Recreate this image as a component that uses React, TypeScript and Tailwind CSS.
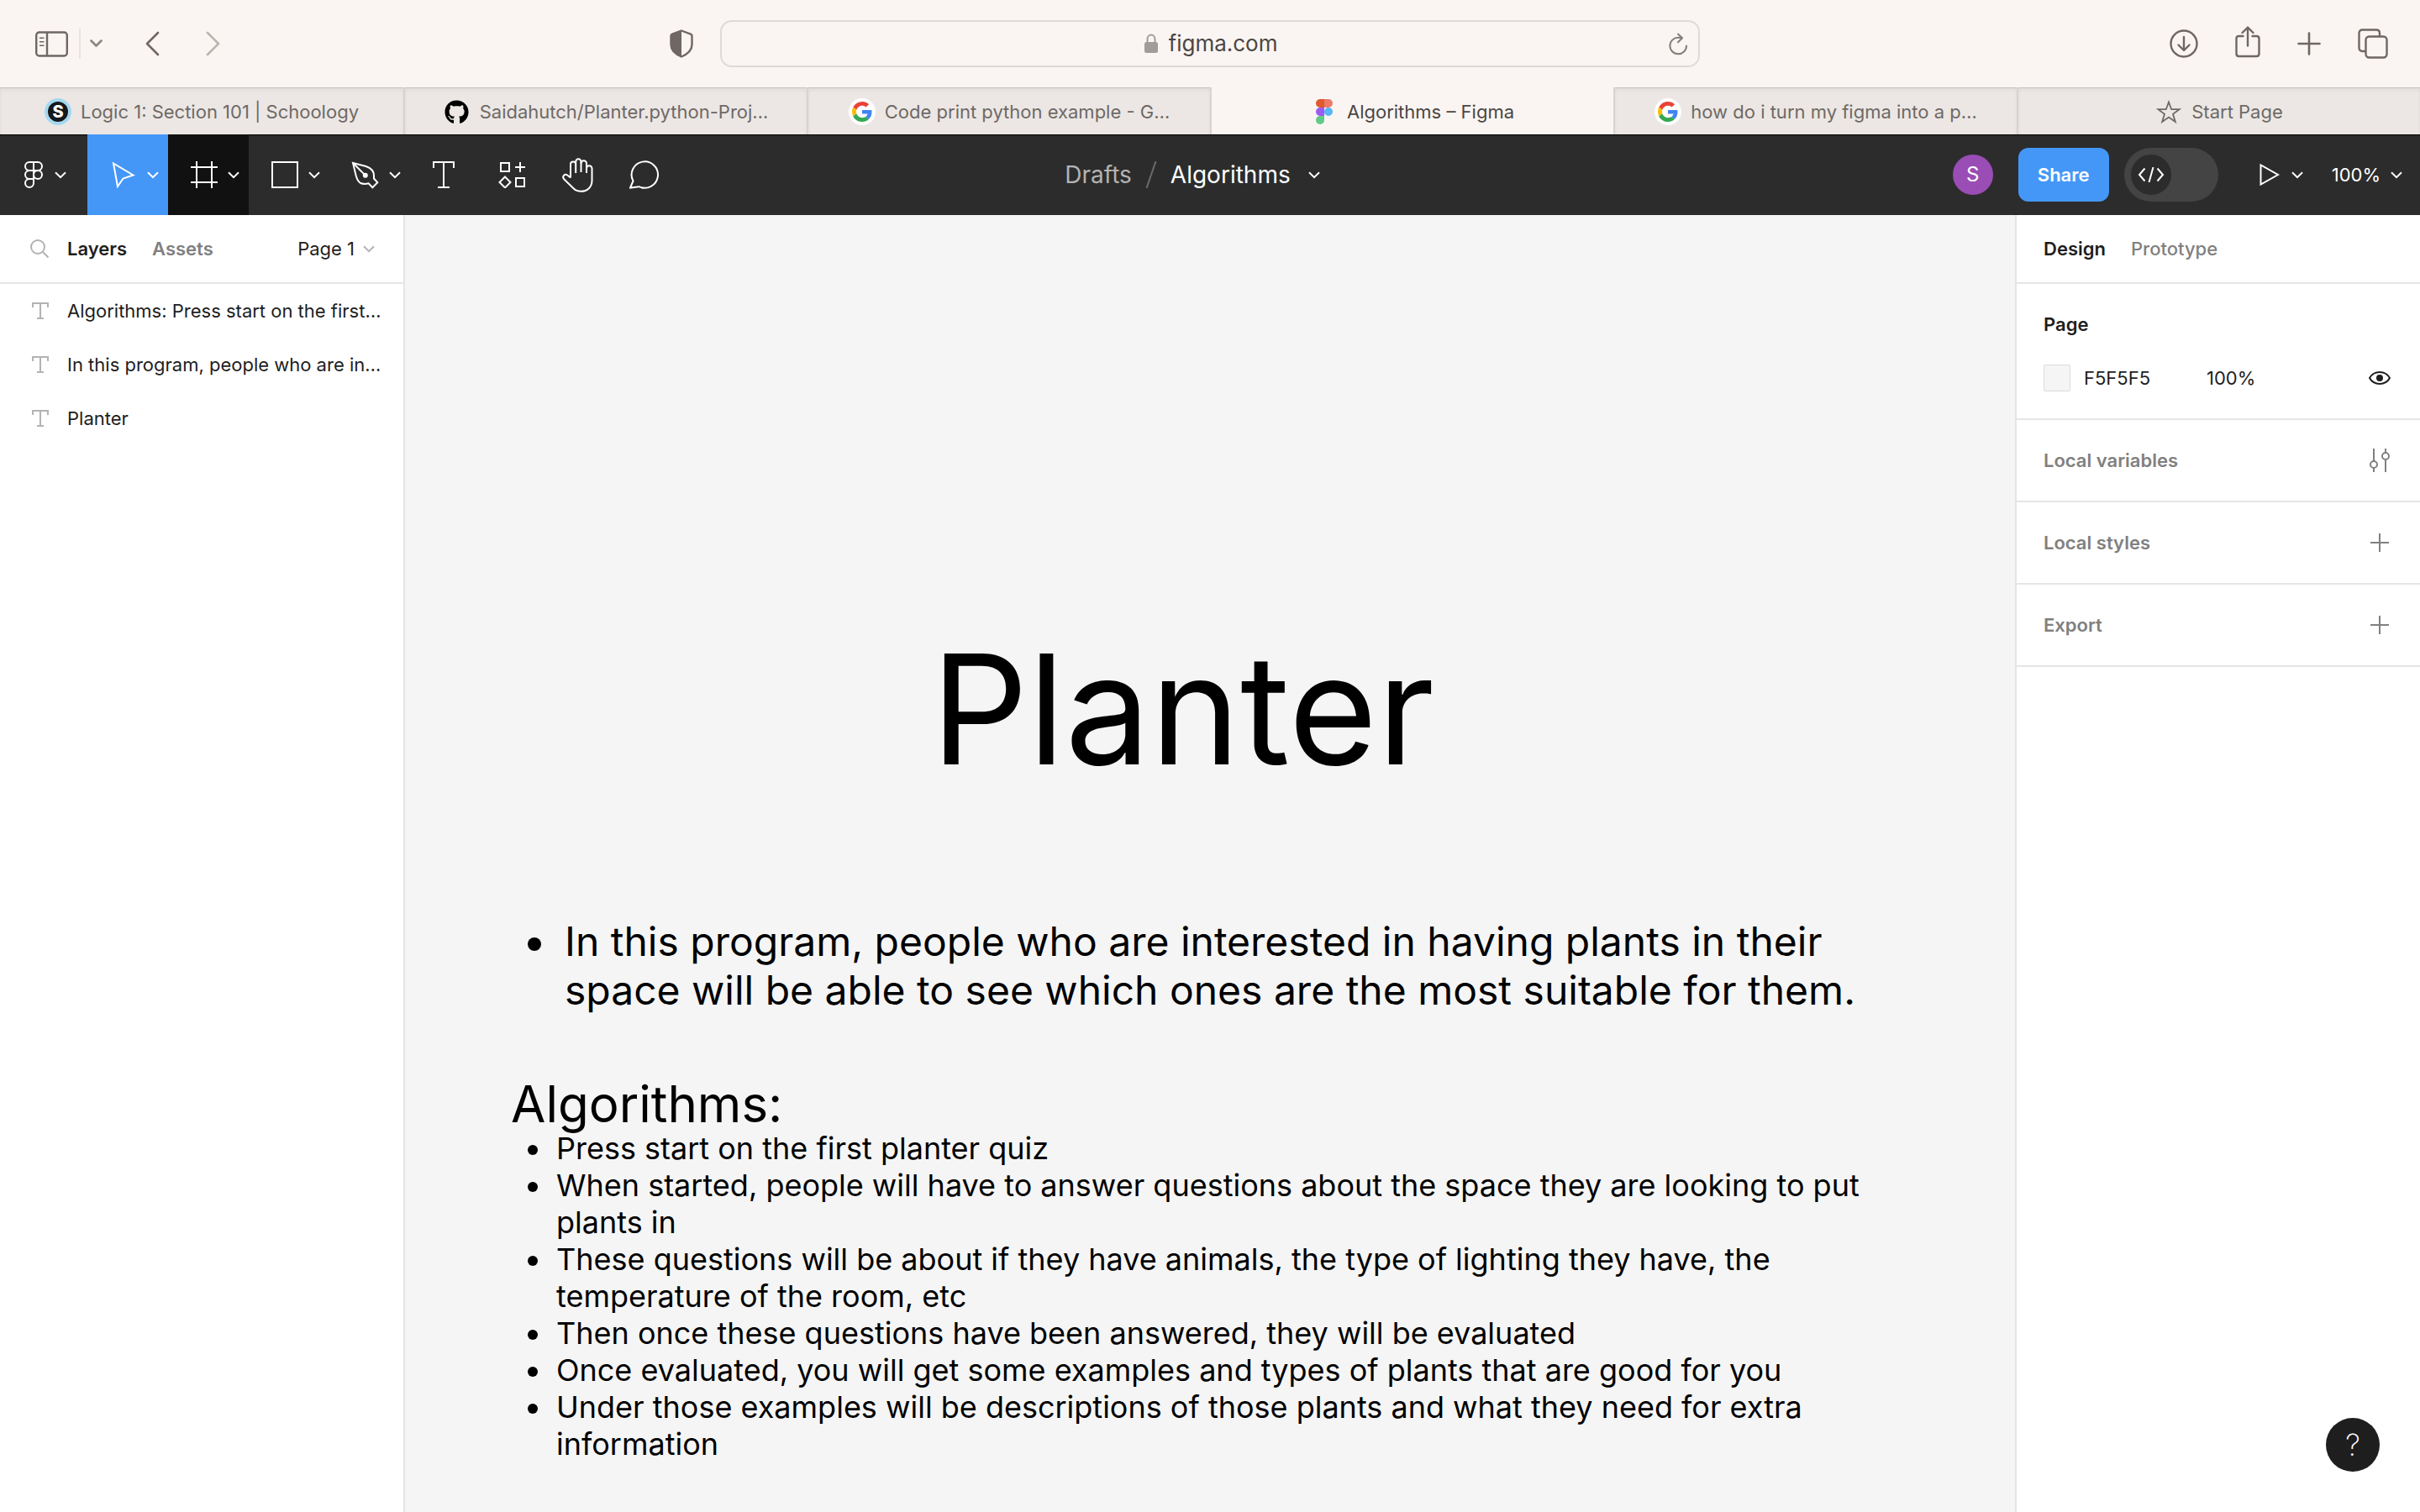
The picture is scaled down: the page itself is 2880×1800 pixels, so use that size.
import type { ReactNode } from "react";
import { FaGithub } from "react-icons/fa";

type IconProps = { className?: string };

function Chevron({ className = "" }: IconProps) {
  return (
    <svg viewBox="0 0 14 9" className={`h-[9px] w-[14px] shrink-0 ${className}`} fill="none" stroke="currentColor" strokeWidth="2" aria-hidden="true">
      <path d="M1 1.2 7 7.2l6-6" />
    </svg>
  );
}

function PlusIcon({ className = "" }: IconProps) {
  return (
    <svg viewBox="0 0 22 22" className={className} fill="none" stroke="currentColor" strokeWidth="2" aria-hidden="true">
      <path d="M11 0v22M0 11h22" />
    </svg>
  );
}

function TypeIcon({ className = "" }: IconProps) {
  return (
    <svg viewBox="0 0 26 32" className={className} fill="none" stroke="currentColor" strokeWidth="2" aria-hidden="true">
      <path d="M1 8V1h24v7M13 1v30M6 31h14" />
    </svg>
  );
}

function SidebarIcon() {
  return (
    <svg viewBox="0 0 39 31" className="h-[31px] w-[39px]" fill="none" stroke="currentColor" strokeWidth="2.4" aria-hidden="true">
      <rect x="1.2" y="1.5" width="36.6" height="28" rx="3.5" />
      <path d="M14 1.5v28" />
      <path d="M5 8.3h5.5M5 12.8h5.5M5 17.3h5.5" strokeWidth="1.5" />
    </svg>
  );
}

function BackIcon({ className = "" }: IconProps) {
  return (
    <svg viewBox="0 0 17 30" className={`h-[30px] w-[17px] ${className}`} fill="none" stroke="currentColor" strokeWidth="2.6" strokeLinecap="round" strokeLinejoin="round" aria-hidden="true">
      <path d="M15 2 2 15l13 13" />
    </svg>
  );
}

function ShieldIcon() {
  return (
    <svg viewBox="0 0 28 34" className="h-[34px] w-[28px]" aria-hidden="true">
      <path d="M14 1.5 25 5.6q1.5.6 1.5 2.2V18c0 7-5.5 11.5-12.5 14.5C7 29.5 1.5 25 1.5 18V7.8q0-1.6 1.5-2.2Z" fill="none" stroke="currentColor" strokeWidth="2.4" />
      <path d="M14 1.5 3 5.6Q1.5 6.2 1.5 7.8V18c0 7 5.5 11.5 12.5 14.5Z" fill="currentColor" />
    </svg>
  );
}

function LockIcon() {
  return (
    <svg viewBox="0 0 18 24" className="h-[24px] w-[18px]" aria-hidden="true">
      <path d="M4.5 11V6.5a4.5 5 0 0 1 9 0V11" fill="none" stroke="currentColor" strokeWidth="2" />
      <rect x="1" y="10" width="16" height="13" rx="2.5" fill="currentColor" />
    </svg>
  );
}

function ReloadIcon() {
  return (
    <svg viewBox="0 0 23 27" className="h-[27px] w-[23px]" fill="none" stroke="currentColor" strokeWidth="2" strokeLinecap="round" strokeLinejoin="round" aria-hidden="true">
      <path d="M21 15.5a9.8 9.8 0 1 1-9.5-9.8l4 .3" />
      <path d="m11 1.5 5 4.7-5 5" />
    </svg>
  );
}

function DownloadIcon() {
  return (
    <svg viewBox="0 0 34 34" className="size-[34px]" fill="none" stroke="currentColor" strokeWidth="2.4" strokeLinecap="round" strokeLinejoin="round" aria-hidden="true">
      <circle cx="17" cy="17" r="15.5" />
      <path d="M17 9v15.5M10.5 18.5l6.5 6.5 6.5-6.5" />
    </svg>
  );
}

function ShareIcon() {
  return (
    <svg viewBox="0 0 30 38" className="h-[38px] w-[30px]" fill="none" stroke="currentColor" strokeWidth="2.4" strokeLinecap="round" strokeLinejoin="round" aria-hidden="true">
      <path d="M9.5 12H4.5Q1.5 12 1.5 15v18q0 3 3 3h21q3 0 3-3V15q0-3-3-3h-5" />
      <path d="M15 23.5V2M8.5 8 15 1.6 21.5 8" />
    </svg>
  );
}

function TabsIcon() {
  return (
    <svg viewBox="0 0 36 36" className="size-[36px]" fill="none" stroke="currentColor" strokeWidth="2.4" aria-hidden="true">
      <rect x="9.5" y="9.5" width="25" height="25" rx="4" />
      <path d="M9.5 27H5.5q-4 0-4-4V5.5q0-4 4-4H22q4 0 4 4v4" />
    </svg>
  );
}

function StarIcon() {
  return (
    <svg viewBox="0 0 30 29" className="h-[29px] w-[30px]" fill="none" stroke="currentColor" strokeWidth="1.8" strokeLinejoin="miter" aria-hidden="true">
      <path d="M15 2.5 18.2 11.2H27.5L20 16.8 22.8 26 15 20.5 7.2 26 10 16.8 2.5 11.2H11.8Z" />
    </svg>
  );
}

function SchoologyIcon() {
  return (
    <span className="flex size-8 items-center justify-center rounded-full bg-[#a4d8f0]">
      <span className="flex size-6 items-center justify-center rounded-full bg-[#15191c] text-[20px] leading-6 font-extrabold text-white">S</span>
    </span>
  );
}

function GoogleIcon() {
  return (
    <span className="flex size-8 items-center justify-center rounded-full bg-white">
      <svg viewBox="0 0 48 48" className="size-6" aria-hidden="true">
        <path fill="#ea4335" d="M24 9.5c3.54 0 6.71 1.22 9.21 3.6l6.85-6.85C35.9 2.38 30.47 0 24 0 14.62 0 6.51 5.38 2.56 13.22l7.98 6.19C12.43 13.72 17.74 9.5 24 9.5z" />
        <path fill="#4285f4" d="M46.98 24.55c0-1.57-.15-3.09-.38-4.55H24v9.02h12.94c-.58 2.96-2.26 5.48-4.78 7.18l7.73 6c4.51-4.18 7.09-10.36 7.09-17.65z" />
        <path fill="#fbbc05" d="M10.53 28.59c-.48-1.45-.76-2.99-.76-4.59s.27-3.14.76-4.59l-7.98-6.19C.92 16.46 0 20.12 0 24c0 3.88.92 7.54 2.56 10.78l7.97-6.19z" />
        <path fill="#34a853" d="M24 48c6.48 0 11.93-2.13 15.89-5.81l-7.73-6c-2.15 1.45-4.92 2.3-8.16 2.3-6.26 0-11.57-4.22-13.47-9.91l-7.98 6.19C6.51 42.62 14.62 48 24 48z" />
      </svg>
    </span>
  );
}

function FigmaColorIcon() {
  return (
    <svg viewBox="0 0 20 30" className="h-[30px] w-5" aria-hidden="true">
      <path fill="#e0592f" d="M10 0H5a5 5 0 0 0 0 10h5z" />
      <path fill="#ee7a6a" d="M10 0h5a5 5 0 0 1 0 10h-5z" />
      <path fill="#9a5cf5" d="M10 10H5a5 5 0 0 0 0 10h5z" />
      <circle fill="#55b6f8" cx="15" cy="15" r="5" />
      <path fill="#5fcb86" d="M5 20a5 5 0 1 0 5 5v-5z" />
    </svg>
  );
}

function FigmaMenuIcon() {
  return (
    <svg viewBox="0 0 22 32" className="h-8 w-[22px]" fill="none" stroke="currentColor" strokeWidth="2" aria-hidden="true">
      <path d="M11 1H6a5 5 0 0 0 0 10h5zM11 1h5a5 5 0 0 1 0 10h-5zM11 11H6a5 5 0 0 0 0 10h5zM6 21a5 5 0 1 0 5 5v-5z" />
      <circle cx="16" cy="16" r="5" />
    </svg>
  );
}

function MoveIcon() {
  return (
    <svg viewBox="0 0 32 32" className="size-8" fill="none" stroke="currentColor" strokeWidth="2" aria-hidden="true">
      <path d="M4 2.5 27.5 16.5 15.5 20.5 9 30Z" />
    </svg>
  );
}

function FrameIcon() {
  return (
    <svg viewBox="0 0 32 32" className="size-8" fill="none" stroke="currentColor" strokeWidth="2" aria-hidden="true">
      <path d="M7 0v32M25 0v32M0 7h32M0 25h32" />
    </svg>
  );
}

function RectIcon() {
  return (
    <svg viewBox="0 0 32 32" className="size-8" fill="none" stroke="currentColor" strokeWidth="2" aria-hidden="true">
      <rect x="1" y="1" width="30" height="30" />
    </svg>
  );
}

function PenIcon() {
  return (
    <svg viewBox="0 0 33 33" className="size-[33px]" fill="none" stroke="currentColor" strokeWidth="2" aria-hidden="true">
      <path d="M2 2 17.5 6C23.5 8 27 12 27 17v3.5l4.3 4.8-6 6-4.6-5c-3 .7-6.5 1-9.7-.3C7.5 24 6.5 20 5.5 16.5Z" />
      <path d="m2 2 14.5 14.5" />
      <circle cx="16.8" cy="16.8" r="3" fill="currentColor" stroke="none" />
    </svg>
  );
}

function ResourcesIcon() {
  return (
    <svg viewBox="-2 0 34 32" className="h-8 w-[34px]" fill="none" stroke="currentColor" strokeWidth="2" aria-hidden="true">
      <rect x="3" y="2" width="10" height="10" />
      <path d="M26 1v12M20 7h12" />
      <path d="m8 18.5 6.5 6.5L8 31.5 1.5 25Z" />
      <rect x="21" y="20" width="10" height="10" />
    </svg>
  );
}

function HandIcon() {
  return (
    <svg viewBox="1 0 38 42" className="h-[42px] w-[38px]" fill="none" stroke="currentColor" strokeWidth="2" strokeLinecap="butt" strokeLinejoin="round" aria-hidden="true">
      <path d="M11 24.5V8.5a3 3 0 0 1 6.2 0V19" />
      <path d="M17.2 8.5V5.5a3.15 3.15 0 0 1 6.3 0V18" />
      <path d="M23.5 7.5a3.25 3.25 0 0 1 6.5 0V19" />
      <path d="M30 13.5a3.25 3.25 0 0 1 6.5 0V28c0 7.5-5.5 12.800-13 12.800-4 0-6.500-1-9-3.500L3.200 26.200c-2.700-3.200.8-6.700 4-4.700l3.800 3" />
    </svg>
  );
}

function CommentIcon() {
  return (
    <svg viewBox="2 0 38 36" className="h-9 w-[38px]" fill="none" stroke="currentColor" strokeWidth="2" aria-hidden="true">
      <path d="M6.500 25.500 3 33.500l10.500-1.300A15.700 15.700 0 1 0 6.500 25.500Z" />
    </svg>
  );
}

function PlayIcon() {
  return (
    <svg viewBox="0 0 24 28" className="h-7 w-6" fill="none" stroke="currentColor" strokeWidth="2" aria-hidden="true">
      <path d="M1.5 2.5v23L22 14Z" />
    </svg>
  );
}

function CodeIcon() {
  return (
    <svg viewBox="0 0 32 18" className="h-[18px] w-8" fill="none" stroke="currentColor" strokeWidth="2" aria-hidden="true">
      <path d="M8.5 1.5 2 9l6.5 7.5M23.5 1.5 30 9l-6.5 7.5M18.5 0 13.5 18" />
    </svg>
  );
}

function SearchIcon() {
  return (
    <svg viewBox="0 0 22 22" className="size-[22px]" fill="none" stroke="currentColor" strokeWidth="2" aria-hidden="true">
      <circle cx="9" cy="9" r="8" />
      <path d="m14.5 14.5 7 7" />
    </svg>
  );
}

function EyeIcon() {
  return (
    <svg viewBox="0 0 26 16" className="h-4 w-[26px]" fill="none" stroke="currentColor" strokeWidth="2" aria-hidden="true">
      <path d="M1 8C3.5 3.5 8 1 13 1s9.500 2.500 12 7c-2.500 4.500-7 7-12 7S3.500 12.500 1 8Z" />
      <circle cx="13" cy="8" r="4" fill="currentColor" stroke="none" />
    </svg>
  );
}

function VariablesIcon() {
  return (
    <svg viewBox="0 0 24 28" className="h-7 w-6" fill="none" stroke="currentColor" strokeWidth="2" aria-hidden="true">
      <path d="M5 0v15M5 23v5M19 0v5M19 13v15" />
      <circle cx="5" cy="19" r="4" />
      <circle cx="19" cy="9" r="4" />
    </svg>
  );
}

function BrowserBar() {
  return (
    <header className="grid h-[104px] grid-cols-[1fr_minmax(0,1166px)_1fr] items-center bg-[#faf5f2] text-[#6e6763]">
      <div className="flex items-center pr-8 pl-[42px]">
        <button type="button" aria-label="Show sidebar"><SidebarIcon /></button>
        <span className="ml-[13px] h-9 w-0.5 bg-[#e8e3e0]" />
        <button type="button" aria-label="Tab groups" className="ml-[11px] text-[#8b8581]">
          <svg viewBox="0 0 15 10" className="h-[10px] w-[15px]" fill="none" stroke="currentColor" strokeWidth="2.6" strokeLinecap="round" strokeLinejoin="round" aria-hidden="true">
            <path d="m1.5 1.5 6 6 6-6" />
          </svg>
        </button>
        <button type="button" aria-label="Back" className="ml-[51px]"><BackIcon /></button>
        <button type="button" aria-label="Forward" className="ml-[55px] text-[#bab4b0]"><BackIcon className="rotate-180" /></button>
        <button type="button" aria-label="Privacy report" className="ml-auto"><ShieldIcon /></button>
      </div>
      <div className="flex h-14 items-center rounded-[14px] border-2 border-[#dfdad7] px-3">
        <span className="w-6" />
        <label className="flex flex-1 items-center justify-center gap-3 text-[#a19c99]">
          <LockIcon />
          <input aria-label="Address" defaultValue="figma.com" className="field-sizing-content text-[26px] leading-8 text-[#4a4644] outline-none" />
        </label>
        <button type="button" aria-label="Reload" className="text-[#837d7a]"><ReloadIcon /></button>
      </div>
      <div className="flex items-center justify-end gap-11 pr-[38px]">
        <button type="button" aria-label="Downloads"><DownloadIcon /></button>
        <button type="button" aria-label="Share page" className="-mt-1"><ShareIcon /></button>
        <button type="button" aria-label="New tab">
          <svg viewBox="0 0 28 28" className="size-7" fill="none" stroke="currentColor" strokeWidth="2.6" strokeLinecap="round" aria-hidden="true">
            <path d="M14 1.5v25M1.5 14h25" />
          </svg>
        </button>
        <button type="button" aria-label="Tab overview"><TabsIcon /></button>
      </div>
    </header>
  );
}

const tabs: { title: string; icon: ReactNode; active?: boolean }[] = [
  { title: "Logic 1: Section 101 | Schoology", icon: <SchoologyIcon /> },
  { title: "Saidahutch/Planter.python-Proj…", icon: <FaGithub className="size-[29px] text-black" /> },
  { title: "Code print python example - G…", icon: <GoogleIcon /> },
  { title: "Algorithms – Figma", icon: <FigmaColorIcon />, active: true },
  { title: "how do i turn my figma into a p…", icon: <GoogleIcon /> },
  { title: "Start Page", icon: <StarIcon /> },
];

function TabBar() {
  return (
    <div role="tablist" aria-label="Browser tabs" className="grid h-14 grid-cols-6">
      {tabs.map((tab) => (
        <button
          key={tab.title}
          type="button"
          role="tab"
          aria-selected={!!tab.active}
          className={
            tab.active
              ? "flex items-center justify-center gap-[11px] border-l-2 border-[#d8d3d0] bg-[#faf5f2] pt-0.5 text-[22px] text-[#4a4644]"
              : "flex items-center justify-center gap-[11px] border-l-2 border-[#d8d3d0] bg-[#ece7e4] pt-0.5 text-[22px] text-[#6e6966] shadow-[inset_0_1px_0_#c8c3c0,inset_0_3px_4px_rgba(0,0,0,0.06)] first:border-l-0"
          }
        >
          <span className="flex w-8 shrink-0 justify-center">{tab.icon}</span>
          <span className="truncate">{tab.title}</span>
        </button>
      ))}
    </div>
  );
}

function DropTool({ label, tone, children }: { label: string; tone?: string; children: ReactNode }) {
  return (
    <button type="button" aria-label={label} className={`flex h-full w-24 items-center justify-end gap-3 pr-[11px] ${tone ?? ""}`}>
      {children}
      <Chevron />
    </button>
  );
}

function Tool({ label, children }: { label: string; children: ReactNode }) {
  return (
    <button type="button" aria-label={label} className="flex h-full w-20 items-center justify-center">
      {children}
    </button>
  );
}

function Toolbar() {
  return (
    <div className="grid h-24 grid-cols-[1fr_auto_1fr] items-center bg-[#2c2c2c] text-white shadow-[inset_0_1px_0_#000000]">
      <div className="flex h-full items-center">
        <button type="button" aria-label="Main menu" className="flex h-full w-[104px] items-center gap-3.5 pl-[29px]">
          <FigmaMenuIcon />
          <Chevron />
        </button>
        <DropTool label="Move" tone="bg-[#4597f7]"><MoveIcon /></DropTool>
        <DropTool label="Frame" tone="bg-[#111111]"><FrameIcon /></DropTool>
        <DropTool label="Shape"><RectIcon /></DropTool>
        <DropTool label="Pen"><PenIcon /></DropTool>
        <Tool label="Text"><TypeIcon className="h-8 w-[26px]" /></Tool>
        <Tool label="Resources"><ResourcesIcon /></Tool>
        <Tool label="Hand"><HandIcon /></Tool>
        <Tool label="Comment"><CommentIcon /></Tool>
      </div>
      <div className="flex items-center pr-[42px] text-[28px] leading-8">
        <a href="#drafts" className="text-[#b3b3b3]">Drafts</a>
        <svg viewBox="0 0 14 32" className="mx-4 h-8 w-[14px]" stroke="#6b6b6b" strokeWidth="2" aria-hidden="true">
          <path d="M12.5 0 1.5 32" />
        </svg>
        <button type="button" className="flex items-center gap-[21px]">
          Algorithms
          <Chevron />
        </button>
      </div>
      <div className="flex items-center justify-end pr-[21px] text-[22px] leading-8">
        <span className="flex size-12 items-center justify-center rounded-full bg-[#9a4db5] text-[24px]">S</span>
        <button type="button" className="ml-[30px] flex h-16 w-[108px] items-center justify-center rounded-xl bg-[#4597f7] font-semibold">Share</button>
        <label className="ml-[18px] flex h-16 w-28 items-center rounded-full bg-[#444444] px-2">
          <input type="checkbox" role="switch" aria-label="Dev Mode" className="sr-only" />
          <span className="flex size-12 items-center justify-center rounded-full bg-[#2c2c2c]"><CodeIcon /></span>
        </label>
        <button type="button" aria-label="Present" className="ml-[49px]"><PlayIcon /></button>
        <button type="button" aria-label="Present options" className="ml-[14px]"><Chevron /></button>
        <button type="button" className="ml-[34px] flex items-center gap-3">
          100%
          <Chevron />
        </button>
      </div>
    </div>
  );
}

const layers = ["Algorithms: Press start on the first…", "In this program, people who are in…", "Planter"];

function LayersPanel() {
  return (
    <aside className="w-[482px] shrink-0 border-r-2 border-[#e5e5e5] bg-white">
      <div className="flex h-[82px] items-center border-b-2 border-[#e5e5e5] pr-[34px] pl-9">
        <button type="button" aria-label="Search" className="text-[#b3b3b3]"><SearchIcon /></button>
        <button type="button" className="ml-[22px] font-semibold">Layers</button>
        <button type="button" className="ml-[30px] font-semibold text-[#808080]">Assets</button>
        <button type="button" className="ml-auto flex items-center gap-2.5">
          Page 1
          <Chevron className="text-[#b3b3b3]" />
        </button>
      </div>
      <ul>
        {layers.map((name) => (
          <li key={name}>
            <button type="button" className="flex h-16 w-full items-center gap-[22px] pl-[38px]">
              <svg viewBox="0 0 20 20" className="size-5 text-[#b3b3b3]" fill="none" stroke="currentColor" strokeWidth="2" aria-hidden="true">
                <path d="M1 6V1h18v5M10 1v18M6 19h8" />
              </svg>
              {name}
            </button>
          </li>
        ))}
      </ul>
    </aside>
  );
}

const steps = [
  "Press start on the first planter quiz",
  "When started, people will have to answer questions about the space they are looking to put plants in",
  "These questions will be about if they have animals, the type of lighting they have, the temperature of the room, etc",
  "Then once these questions have been answered, they will be evaluated",
  "Once evaluated, you will get some examples and types of plants that are good for you",
  "Under those examples will be descriptions of those plants and what they need for extra information",
];

function Canvas() {
  return (
    <main className="min-w-0 flex-1 bg-[#f5f5f5] pl-[126px] text-black">
      <h1 className="mt-[480px] ml-[500px] text-[181px] leading-[218px]">Planter</h1>
      <ul className="mt-[138px] w-[1630px] max-w-full">
        <li className="flex text-[48px] leading-[58px]">
          <span aria-hidden="true" className="mt-6 mr-7 ml-5 size-4 shrink-0 rounded-full bg-black" />
          In this program, people who are interested in having plants in their space will be able to see which ones are the most suitable for them.
        </li>
      </ul>
      <h2 className="mt-[75px] text-[60px] leading-[62px]">Algorithms:</h2>
      <ul className="w-[1630px] max-w-full">
        {steps.map((step) => (
          <li key={step} className="flex text-[36px] leading-[44px]">
            <span aria-hidden="true" className="mt-[18px] mr-[22px] ml-5 size-3 shrink-0 rounded-full bg-black" />
            {step}
          </li>
        ))}
      </ul>
    </main>
  );
}

function PanelRow({ title, children }: { title: string; children: ReactNode }) {
  return (
    <section className="flex h-[98px] items-center justify-between border-b-2 border-[#e5e5e5] pr-9 pl-8 text-[#808080]">
      <h2 className="font-semibold">{title}</h2>
      <button type="button" aria-label={title} className="flex w-6 justify-center">{children}</button>
    </section>
  );
}

function DesignPanel() {
  return (
    <aside className="w-[482px] shrink-0 border-l-2 border-[#e5e5e5] bg-white">
      <div className="flex h-[82px] items-center gap-[30px] border-b-2 border-[#e5e5e5] pl-8">
        <button type="button" className="font-semibold">Design</button>
        <button type="button" className="font-medium text-[#808080]">Prototype</button>
      </div>
      <section className="border-b-2 border-[#e5e5e5] pt-8 pb-4 pl-8">
        <h2 className="h-8 font-semibold">Page</h2>
        <div className="mt-4 flex h-16 items-center pr-[35px]">
          <button type="button" aria-label="Page color" className="size-8 rounded-xs border border-[#dcdcdc] bg-[#f5f5f5]" />
          <input aria-label="Hex" defaultValue="F5F5F5" className="ml-4 w-[146px] outline-none" />
          <input aria-label="Opacity" defaultValue="100%" className="w-20 outline-none" />
          <button type="button" aria-label="Toggle visibility" className="ml-auto"><EyeIcon /></button>
        </div>
      </section>
      <PanelRow title="Local variables"><VariablesIcon /></PanelRow>
      <PanelRow title="Local styles"><PlusIcon className="size-[22px]" /></PanelRow>
      <PanelRow title="Export"><PlusIcon className="size-[22px]" /></PanelRow>
    </aside>
  );
}

export default function App() {
  return (
    <div className="flex min-h-screen flex-col bg-white font-['Inter',sans-serif] text-[22px] leading-8 text-[#1e1e1e] [font-optical-sizing:none]">
      <BrowserBar />
      <TabBar />
      <Toolbar />
      <div className="flex flex-1">
        <LayersPanel />
        <Canvas />
        <DesignPanel />
      </div>
      <button type="button" aria-label="Help" className="fixed right-12 bottom-12 flex size-16 items-center justify-center rounded-full bg-[#1e1e1e] text-[36px] font-extralight text-white">
        ?
      </button>
    </div>
  );
}
